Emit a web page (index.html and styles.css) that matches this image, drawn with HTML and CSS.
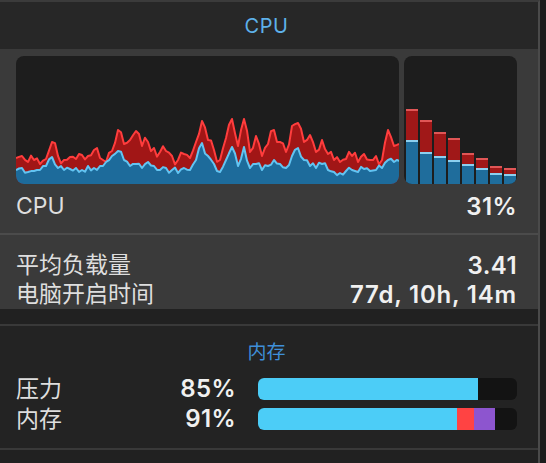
FILE: index.html
```html
<!DOCTYPE html>
<html lang="zh-CN">
<head>
    <meta charset="UTF-8">
    <title>CPU</title>
    <link rel="stylesheet" href="styles.css">
</head>
<body>
    <div class="panel">
        <div class="header">CPU</div>

        <div class="cpu">
            <div class="graphs">
                <div class="graph">
                    <svg id="history" viewBox="0 0 383 128" preserveAspectRatio="none">
                        <path id="red-area" class="red-area"></path>
                        <path id="blue-area" class="blue-area"></path>
                        <path id="red-line" class="red-line"></path>
                        <path id="blue-line" class="blue-line"></path>
                    </svg>
                </div>
                <div class="bars">
                    <div class="bar"><div class="sys" style="height: 31px"></div><div class="user" style="height: 44px"></div></div>
                    <div class="bar"><div class="sys" style="height: 32px"></div><div class="user" style="height: 32px"></div></div>
                    <div class="bar"><div class="sys" style="height: 24px"></div><div class="user" style="height: 28px"></div></div>
                    <div class="bar"><div class="sys" style="height: 22px"></div><div class="user" style="height: 24px"></div></div>
                    <div class="bar"><div class="sys" style="height: 11px"></div><div class="user" style="height: 20px"></div></div>
                    <div class="bar"><div class="sys" style="height: 10px"></div><div class="user" style="height: 16px"></div></div>
                    <div class="bar"><div class="sys" style="height: 7px"></div><div class="user" style="height: 11px"></div></div>
                    <div class="bar"><div class="sys" style="height: 6px"></div><div class="user" style="height: 10px"></div></div>
                </div>
            </div>

            <div class="row cpu-row">
                <span>CPU</span>
                <span class="value">31%</span>
            </div>

            <div class="divider"></div>

            <div class="stats">
                <div class="row">
                    <span>平均负载量</span>
                    <span class="value">3.41</span>
                </div>
                <div class="row">
                    <span>电脑开启时间</span>
                    <span class="value uptime">77d, 10h, 14m</span>
                </div>
            </div>
        </div>

        <div class="memory">
            <div class="title">内存</div>
            <div class="mem-row">
                <span>压力</span>
                <span class="value">85%</span>
                <div class="meter">
                    <div class="fill app" style="width: 85%"></div>
                </div>
            </div>
            <div class="mem-row">
                <span>内存</span>
                <span class="value">91%</span>
                <div class="meter">
                    <div class="fill app" style="width: 76.8%"></div>
                    <div class="fill wired" style="width: 6.6%"></div>
                    <div class="fill compressed" style="width: 8.1%"></div>
                </div>
            </div>
        </div>
    </div>

    <script>
        // cpu history, y positions inside the 383x128 graph, one sample every 6px
        const system = [102, 100, 106, 104, 108, 103, 86, 100, 104, 101, 103, 99, 100, 94, 102, 106, 95, 74, 88, 84, 75, 90, 86, 92, 96, 95, 100, 104, 98, 102, 86, 65, 84, 94, 104, 82, 63, 90, 63, 96, 80, 100, 88, 74, 86, 96, 70, 67, 86, 79, 96, 84, 98, 104, 106, 103, 100, 106, 98, 104, 100, 104, 74, 90, 88];
        const user = [114, 112, 116, 115, 114, 110, 101, 112, 114, 113, 112, 114, 110, 112, 110, 106, 100, 95, 104, 110, 108, 112, 106, 110, 114, 112, 114, 117, 112, 114, 104, 87, 100, 108, 116, 104, 91, 110, 91, 112, 108, 114, 110, 104, 108, 112, 100, 92, 104, 110, 112, 108, 114, 116, 117, 115, 114, 116, 113, 115, 114, 112, 104, 106, 105];

        // fill in the half steps with a little noise so the line stays jagged
        let seed = 7;
        function noise() {
            seed = (seed * 9301 + 49297) % 233280;
            return seed / 233280 - 0.5;
        }

        function points(values, amount) {
            const out = [];
            values.forEach((y, i) => {
                out.push([i * 6, y]);
                if (i < values.length - 1) {
                    const mid = (y + values[i + 1]) / 2 + noise() * amount;
                    out.push([i * 6 + 3, Math.min(mid, 124)]);
                }
            });
            return out;
        }

        function line(pts) {
            return pts.map((p, i) => (i ? "L" : "M") + Math.min(p[0], 383) + " " + p[1].toFixed(1)).join(" ");
        }

        const red = points(system, 14);
        const blue = points(user, 8);

        document.getElementById("red-area").setAttribute("d", line(red) + " L383 128 L0 128 Z");
        document.getElementById("blue-area").setAttribute("d", line(blue) + " L383 128 L0 128 Z");
        document.getElementById("red-line").setAttribute("d", line(red));
        document.getElementById("blue-line").setAttribute("d", line(blue));
    </script>
</body>
</html>
```

FILE: styles.css
```css
body {
    margin: 0;
    background-color: #1c1c1c;
    font-family: Inter, "Noto Sans CJK SC", sans-serif;
    color: #dedede;
}
.panel {
    width: 538px;
    height: 463px;
    border-right: 2px solid #4a4a4a;
    border-top: 2px solid #3b3b3b;
    background-color: #212121;
}
.header {
    height: 47px;
    padding: 0 21px 0 16px;
    display: flex;
    align-items: center;
    justify-content: center;
    background-color: #272727;
    color: #5eb1ea;
    font-size: 20px;
    line-height: 24px;
    letter-spacing: 0.5px;
}
.cpu {
    height: 260px;
    padding: 7px 21px 0 16px;
    box-sizing: border-box;
    background-color: #3a3a3a;
}
.graphs {
    display: flex;
    gap: 5px;
    height: 128px;
}
.graph,
.bars {
    background-color: #1d1d1d;
    border-radius: 8px;
    overflow: hidden;
}
.graph {
    flex: 1;
}
.graph svg {
    display: block;
    width: 100%;
    height: 100%;
}
.red-area {
    fill: #a11616;
}
.blue-area {
    fill: #1d6b9b;
}
.red-line,
.blue-line {
    fill: none;
    stroke-width: 2;
    stroke-linejoin: round;
}
.red-line {
    stroke: #ff3d3d;
}
.blue-line {
    stroke: #62c4f2;
}
.bars {
    width: 113px;
    padding: 0 1px 0 2px;
    box-sizing: border-box;
    display: flex;
    align-items: flex-end;
    gap: 2px;
}
.bar {
    flex: 1;
    display: flex;
    flex-direction: column;
}
.bar .sys {
    background-color: #a01818;
    border-top: 2px solid #e05656;
    box-sizing: border-box;
}
.bar .user {
    background-color: #1f6d9c;
    border-top: 2px solid #8cd0f0;
    box-sizing: border-box;
}
.row {
    display: flex;
    justify-content: space-between;
    font-size: 23px;
    line-height: 29px;
}
.value {
    font-weight: 600;
    color: #f0f0f0;
    font-size: 24px;
    letter-spacing: 0.4px;
}
.uptime {
    letter-spacing: 0.8px;
}
.cpu-row {
    margin-top: 8px;
}
.divider {
    height: 2px;
    margin: 12px -21px 0 -16px;
    background-color: #4b4b4b;
}
.stats {
    margin-top: 16px;
}
.memory {
    margin-top: 15px;
    padding: 15px 21px 18px 16px;
    border-top: 2px solid #393939;
    border-bottom: 2px solid #393939;
    background-color: #232323;
}
.title {
    text-align: center;
    color: #3f8fd8;
    font-size: 19px;
    line-height: 24px;
    margin-bottom: 13px;
}
.mem-row {
    display: grid;
    grid-template-columns: 1fr auto 259px;
    column-gap: 22px;
    align-items: center;
    height: 22px;
    font-size: 23px;
    line-height: 22px;
}
.mem-row + .mem-row {
    margin-top: 8px;
}
.meter {
    display: flex;
    height: 22px;
    border-radius: 6px;
    overflow: hidden;
    background-color: #131313;
}
.fill.app {
    background-color: #4ccdf7;
}
.fill.wired {
    background-color: #ff4343;
}
.fill.compressed {
    background-color: #8d55cf;
}
```
